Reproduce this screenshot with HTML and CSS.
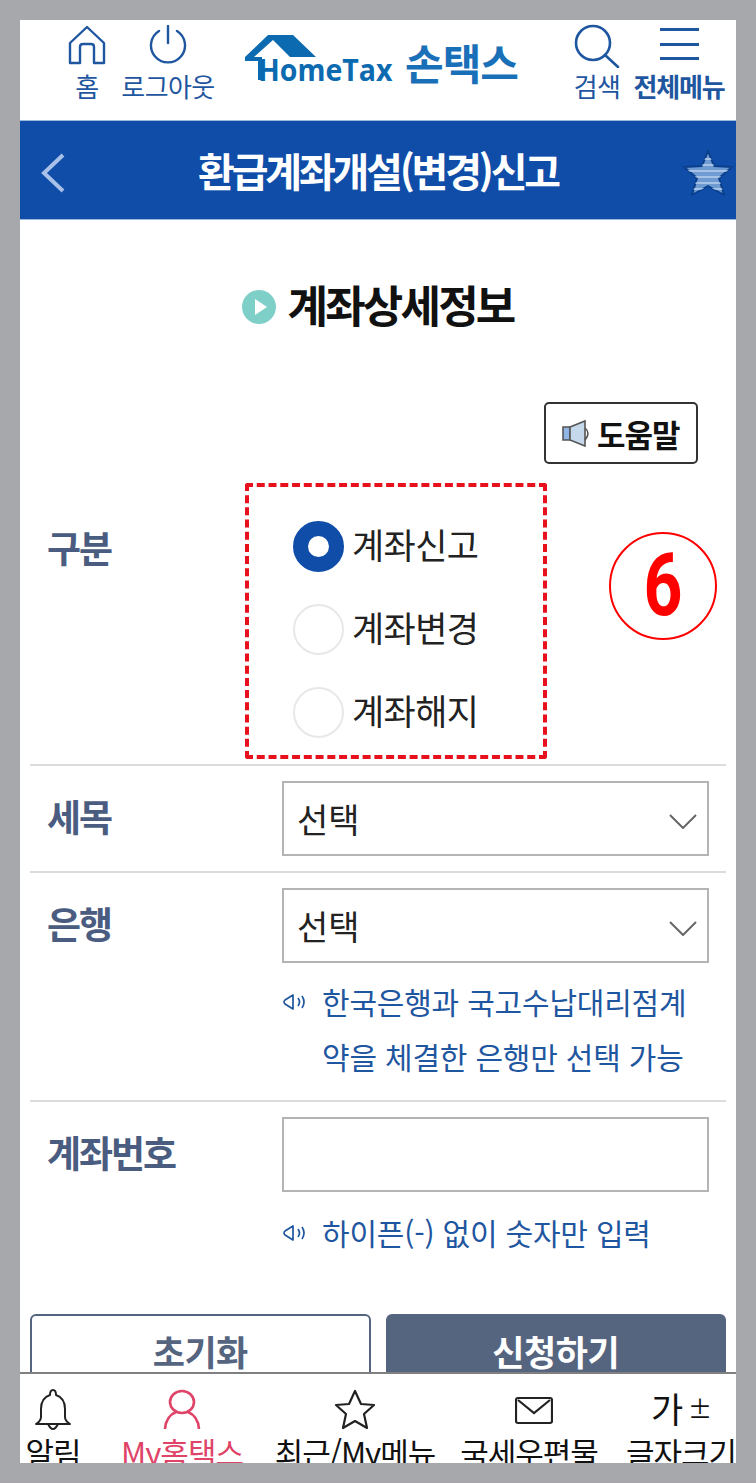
FILE: index.html
```html
<!DOCTYPE html>
<html lang="ko">
  <head>
    <meta charset="UTF-8" />
    <meta name="viewport" content="width=device-width, initial-scale=1.0" />
    <title>환급계좌개설(변경)신고</title>
    <link rel="stylesheet" href="styles.css">
  </head>

  <body>
    <div class="frame">
      <!-- header -->
      <div class="header">
        <a class="head-item">
          <svg class="head-icon" width="38" height="40" viewBox="0 0 38 40" fill="none" stroke="#1f56a0" stroke-width="2.4" stroke-linejoin="round">
            <path d="M19 2 L36 18 V38 H26 V22 Q26 19 23 19 H15 Q12 19 12 22 V38 H2 V18 Z" />
          </svg>
          <span>홈</span>
        </a>
        <a class="head-item">
          <svg class="head-icon" width="38" height="40" viewBox="0 0 38 40" fill="none" stroke="#1f56a0" stroke-width="2.4" stroke-linecap="round">
            <path d="M19 1 V18" />
            <path d="M10 6 A17 17 0 1 0 28 6" />
          </svg>
          <span>로그아웃</span>
        </a>
        <div class="logo">
          <svg class="logo-house" width="72" height="50" viewBox="0 0 72 50">
            <path d="M23 1 H48 L71 23 H45 L28 6 L9 23 H17 V46 H13 V27 H0 V23 Z" fill="#0b6ab0" />
          </svg>
          <span class="logo-text">HomeTax</span>
          <span class="logo-kr">손택스</span>
        </div>
        <a class="head-item">
          <svg class="head-icon search-icon" width="46" height="44" viewBox="0 0 46 44" fill="none" stroke="#1f56a0" stroke-width="2.6" stroke-linecap="round">
            <circle cx="19" cy="19" r="17" />
            <path d="M31 31 L44 43" />
          </svg>
          <span>검색</span>
        </a>
        <a class="head-item head-bold">
          <div class="burger"><i></i><i></i><i></i></div>
          <span>전체메뉴</span>
        </a>
      </div>

      <div class="title-bar">
        <svg class="back" width="26" height="40" viewBox="0 0 26 40" fill="none" stroke="#a9c0e8" stroke-width="4">
          <path d="M23 2 L4 20 L23 38" />
        </svg>
        <h1>환급계좌개설(변경)신고</h1>
        <svg class="fav" width="50" height="46" viewBox="0 0 50 46">
          <defs>
            <clipPath id="favClip">
              <path d="M25 1 L31 16 L49 17 L36 28 L41 45 L25 36 L9 45 L14 28 L1 17 L19 16 Z" />
            </clipPath>
          </defs>
          <path d="M25 1 L31 16 L49 17 L36 28 L41 45 L25 36 L9 45 L14 28 L1 17 L19 16 Z" fill="#6f9ad2" stroke="#0a3f8c" stroke-width="2" stroke-linejoin="round" />
          <path clip-path="url(#favClip)" d="M0 9 H50 M0 15 H50 M0 21 H50 M0 27 H50 M0 33 H50 M0 39 H50" stroke="#b9cfee" stroke-width="1.6" />
        </svg>
      </div>

      <div class="content">
        <div class="sub-title">
          <span class="play"><i></i></span>
          <h2>계좌상세정보</h2>
        </div>

        <div class="help-row">
          <button class="help-btn">
            <svg width="30" height="28" viewBox="0 0 30 28">
              <path d="M2 8 H9 V21 H2 Z" fill="#8fb6e4" stroke="#555" stroke-width="1.6" />
              <path d="M9 8 L24 2 V27 L9 21 Z" fill="#c6d9ec" stroke="#555" stroke-width="1.6" />
              <path d="M24 9 Q30 14 24 21" fill="none" stroke="#555" stroke-width="1.6" />
            </svg>
            도움말
          </button>
        </div>

        <div class="row row-type">
          <div class="label">구분</div>
          <div class="radios">
            <label class="radio"><span class="dot on"></span>계좌신고</label>
            <label class="radio"><span class="dot"></span>계좌변경</label>
            <label class="radio"><span class="dot"></span>계좌해지</label>
          </div>
          <div class="step-no"><span>6</span></div>
        </div>

        <div class="row">
          <div class="label">세목</div>
          <div class="field">
            <div class="select">선택
              <svg width="28" height="16" viewBox="0 0 28 16" fill="none" stroke="#666" stroke-width="2"><path d="M1 2 L14 15 L27 2" /></svg>
            </div>
          </div>
        </div>

        <div class="row row-bank">
          <div class="label">은행</div>
          <div class="field">
            <div class="select">선택
              <svg width="28" height="16" viewBox="0 0 28 16" fill="none" stroke="#666" stroke-width="2"><path d="M1 2 L14 15 L27 2" /></svg>
            </div>
            <div class="hint">
              <svg width="26" height="16" viewBox="0 0 26 16" fill="none" stroke="#1f56a0" stroke-width="1.7">
                <path d="M2 8 Q2 7 3 6 L11 1 V15 L3 10 Q2 9 2 8 Z" stroke-linejoin="round" />
                <path d="M16 4 Q19 8 16 12 M20 2 Q24 8 20 14" />
              </svg>
              <p>한국은행과 국고수납대리점계<br />약을 체결한 은행만 선택 가능</p>
            </div>
          </div>
        </div>

        <div class="row row-account">
          <div class="label">계좌번호</div>
          <div class="field">
            <div class="select"></div>
            <div class="hint">
              <svg width="26" height="16" viewBox="0 0 26 16" fill="none" stroke="#1f56a0" stroke-width="1.7">
                <path d="M2 8 Q2 7 3 6 L11 1 V15 L3 10 Q2 9 2 8 Z" stroke-linejoin="round" />
                <path d="M16 4 Q19 8 16 12 M20 2 Q24 8 20 14" />
              </svg>
              <p>하이픈(-) 없이 숫자만 입력</p>
            </div>
          </div>
        </div>

        <div class="buttons">
          <button class="btn">초기화</button>
          <button class="btn btn-main">신청하기</button>
        </div>
      </div>

      <!-- bottom menu -->
      <div class="nav">
        <a class="nav-item">
          <svg width="38" height="42" viewBox="0 0 38 42" fill="none" stroke="#222" stroke-width="2">
            <path d="M19 1 Q16 1 16 6 Q7 9 7 20 V28 Q7 32 2 35 H36 Q31 32 31 28 V20 Q31 9 22 6 Q22 1 19 1 Z" stroke-linejoin="round" />
            <path d="M14 35 Q19 45 24 35" />
          </svg>
          <span>알림</span>
        </a>
        <a class="nav-item nav-on">
          <svg width="38" height="40" viewBox="0 0 38 40" fill="none" stroke="#df4468" stroke-width="2.6">
            <ellipse cx="19" cy="12" rx="12" ry="11" />
            <path d="M2 39 Q3 26 13 22 M36 39 Q35 26 25 22" />
          </svg>
          <span>My홈택스</span>
        </a>
        <a class="nav-item">
          <svg width="42" height="42" viewBox="0 0 42 42" fill="none" stroke="#222" stroke-width="2.2" stroke-linejoin="round">
            <path d="M21 2 L27 15 L40 16 L30 25 L33 39 L21 32 L9 39 L12 25 L2 16 L15 15 Z" />
          </svg>
          <span>최근/My메뉴</span>
        </a>
        <a class="nav-item">
          <svg class="mail-icon" width="38" height="42" viewBox="0 0 38 42" fill="none" stroke="#222" stroke-width="2.2">
            <rect x="1" y="9" width="36" height="25" rx="2" />
            <path d="M3 11 L19 24 L35 11" />
          </svg>
          <span>국세우편물</span>
        </a>
        <a class="nav-item">
          <div class="font-size"><span>가</span><span class="plus-minus">±</span></div>
          <span>글자크기</span>
        </a>
      </div>
    </div>
  </body>
</html>
```

FILE: styles.css
```css
* {
  box-sizing: border-box;
}

body {
  margin: 0;
  padding: 20px;
  height: 1483px;
  overflow: hidden;
  background-color: #a7a8ac;
  font-family: "Noto Sans CJK KR", "Noto Sans", sans-serif;
}

h1,
h2,
p {
  margin: 0;
}

.frame {
  display: flex;
  flex-direction: column;
  height: 1443px;
  background-color: #fff;
  overflow: hidden;
}

/* header */
.header {
  display: grid;
  grid-template-columns: 54px 108px 338px 74px 90px;
  flex: none;
  height: 100px;
  padding-left: 40px;
  color: #1f56a0;
}

.head-item {
  display: flex;
  flex-direction: column;
  align-items: center;
  font-size: 26px;
  letter-spacing: -0.6px;
  line-height: 36px;
  white-space: nowrap;
}

.head-icon {
  margin-top: 5px;
  margin-bottom: 3px;
  flex: none;
}

.search-icon {
  margin-top: 4px;
  margin-bottom: 0;
}

.head-bold {
  font-weight: 700;
  letter-spacing: -1.2px;
}

.burger {
  display: flex;
  flex-direction: column;
  justify-content: space-between;
  width: 39px;
  height: 32px;
  margin-top: 8px;
  margin-bottom: 8px;
}

.burger i {
  display: block;
  height: 3px;
  background-color: #1f56a0;
}

.logo {
  position: relative;
  padding-left: 23px;
}

.logo-house {
  position: absolute;
  left: 23px;
  top: 14px;
}

.logo-text {
  position: absolute;
  left: 36px;
  top: 30px;
  font-family: "Open Sans", sans-serif;
  font-weight: 700;
  font-size: 30px;
  line-height: 40px;
  color: #0b6ab0;
  transform: scaleX(0.95);
  transform-origin: left center;
}

.logo-kr {
  position: absolute;
  left: 183px;
  top: 11px;
  font-weight: 700;
  font-size: 42px;
  letter-spacing: -1px;
  color: #1a70b8;
}

.title-bar {
  position: relative;
  display: flex;
  justify-content: center;
  align-items: center;
  flex: none;
  height: 100px;
  background-color: #0f4da8;
  border-top: 1px solid #9db8dd;
  border-bottom: 1px solid #9db8dd;
}

.title-bar h1 {
  color: #fff;
  font-size: 40px;
  font-weight: 700;
  letter-spacing: -3.2px;
}

.back {
  position: absolute;
  left: 20px;
  top: 32px;
}

.fav {
  position: absolute;
  right: 3px;
  top: 29px;
}

/* content */
.content {
  flex: 1;
  min-height: 0;
  overflow: hidden;
  padding: 0 10px;
}

.sub-title {
  display: flex;
  justify-content: center;
  align-items: center;
  gap: 11px;
  height: 62px;
  margin-top: 53px;
}

.sub-title h2 {
  font-size: 44px;
  font-weight: 700;
  letter-spacing: -2.8px;
  color: #111;
}

.play {
  display: flex;
  justify-content: center;
  align-items: center;
  width: 34px;
  height: 34px;
  margin-top: 6px;
  border-radius: 50%;
  background-color: #7fcfc9;
}

.play i {
  display: block;
  margin-left: 3px;
  border-left: 12px solid #fff;
  border-top: 8px solid transparent;
  border-bottom: 8px solid transparent;
}

.help-row {
  display: flex;
  justify-content: flex-end;
  margin-top: 67px;
  padding-right: 28px;
}

.help-btn {
  display: flex;
  align-items: center;
  gap: 6px;
  width: 154px;
  height: 62px;
  padding: 0 0 0 15px;
  border: 2px solid #333;
  border-radius: 5px;
  background-color: #fff;
  font-family: inherit;
  font-size: 31px;
  font-weight: 700;
  letter-spacing: -1px;
  color: #111;
}

.row {
  display: flex;
  align-items: flex-start;
  border-top: 2px solid #dcdcdc;
  padding: 15px 17px 15px 17px;
}

.row-type {
  position: relative;
  border-top: none;
  padding: 19px 0 5px 215px;
  border-bottom: 2px solid #dcdcdc;
  margin-bottom: -2px;
}

.row-type .label {
  position: absolute;
  left: 17px;
  top: 48px;
}

.label {
  flex: none;
  width: 235px;
  font-size: 37px;
  line-height: 44px;
  margin-top: 13px;
  font-weight: 700;
  letter-spacing: -2px;
  color: #4a5d80;
}

.radios {
  display: flex;
  flex-direction: column;
  justify-content: center;
  gap: 32px;
  width: 302px;
  height: 276px;
  padding-top: 10px;
  padding-left: 44px;
  border: 4px dashed #e8101c;
  border-radius: 3px;
}

.radio {
  display: flex;
  align-items: center;
  gap: 8px;
  height: 51px;
  font-size: 35px;
  letter-spacing: -0.6px;
  color: #222;
}

.dot {
  width: 51px;
  height: 51px;
  margin-top: 6px;
  border-radius: 50%;
  border: 2px solid #e8e8e8;
}

.dot.on {
  border: 15px solid #0f4da8;
}

.step-no {
  position: absolute;
  left: 579px;
  top: 68px;
  width: 108px;
  height: 108px;
  border: 2px solid #f00;
  border-radius: 50%;
  color: #f00;
  font-family: Roboto, sans-serif;
  font-size: 80px;
  font-weight: 700;
  line-height: 104px;
  text-align: center;
}

.step-no span {
  display: inline-block;
  transform: scale(0.85, 1.08);
}

.field {
  width: 427px;
}

.select {
  display: flex;
  justify-content: space-between;
  align-items: center;
  height: 75px;
  padding: 0 10px 0 13px;
  border: 2px solid #b4b4b4;
  font-size: 34px;
  color: #222;
}

.select svg {
  margin-top: 5px;
}

.hint {
  display: flex;
  gap: 14px;
  margin-top: 11px;
  color: #1f56a0;
  font-size: 30px;
  line-height: 55px;
  letter-spacing: -0.2px;
  white-space: nowrap;
}

.hint svg {
  flex: none;
  margin-top: 20px;
}

.row-bank {
  padding-bottom: 16px;
}

.row-account {
  padding-bottom: 0;
}

.row-account .hint {
  margin-top: 13px;
}

.buttons {
  display: flex;
  gap: 15px;
  margin-top: 54px;
}

.btn {
  flex: 1;
  height: 76px;
  padding-bottom: 4px;
  border: 2px solid #55647f;
  border-radius: 6px;
  background-color: #fff;
  font-family: inherit;
  font-size: 35px;
  font-weight: 700;
  letter-spacing: -0.5px;
  color: #55647f;
}

.btn-main {
  background-color: #55647f;
  color: #fff;
}

/* bottom menu */
.nav {
  display: grid;
  grid-template-columns: 66px 192px 154px 194px 110px;
  flex: none;
  height: 91px;
  overflow: hidden;
  border-top: 2px solid #808080;
  background-color: #fff;
}

.nav-item {
  display: flex;
  flex-direction: column;
  align-items: center;
  color: #111;
  font-size: 31px;
  letter-spacing: -1px;
  line-height: 40px;
  white-space: nowrap;
}

.nav-item svg {
  flex: none;
  height: 42px;
  margin-top: 15px;
  margin-bottom: 1px;
}

.nav-item .mail-icon {
  margin-left: 10px;
}

.nav-on {
  color: #df4468;
}

.font-size {
  display: flex;
  align-items: center;
  gap: 6px;
  height: 42px;
  margin-top: 13px;
  margin-bottom: 3px;
  color: #111;
  font-size: 35px;
}

.plus-minus {
  font-size: 24px;
}
```
